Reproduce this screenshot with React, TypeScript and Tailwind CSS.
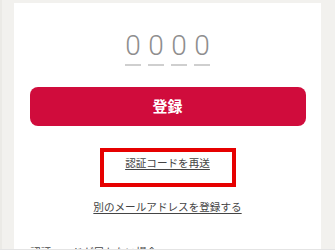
import React from "react";

const jp = { fontFamily: '"Noto Sans CJK JP", "Noto Sans", sans-serif' };

export default function App() {
  return (
    <div
      className="relative w-[335px] h-[250px] overflow-hidden bg-[#f2f1ee] pt-[3px] px-[14px]"
      style={jp}
    >
      <div className="absolute left-0 top-0 h-full w-[2px] bg-[#ebeae6]" />
      <div className="bg-white h-full flex flex-col items-center overflow-hidden">
        <div className="shrink-0 mt-[29px] flex gap-[7px]">
          {[0, 1, 2, 3].map((i) => (
            <div key={i} className="w-[16px] flex flex-col items-center">
              <span
                className="text-[28px] leading-[28px] font-light text-[#8e8e8e]"
                style={{ fontFamily: 'Roboto, "Noto Sans", sans-serif' }}
              >
                0
              </span>
              <div className="w-full h-[2px] bg-[#cfcfcf] mt-[4px]" />
            </div>
          ))}
        </div>
        <button className="shrink-0 mt-[21px] w-[276px] h-[39px] rounded-[8px] bg-[#d00c3c] text-white font-bold text-[15px] flex items-center justify-center">
          登録
        </button>
        <a className="shrink-0 mt-[29px] text-[10.6px] leading-[16px] text-[#444] underline underline-offset-[2px]">
          認証コードを再送
        </a>
        <a className="shrink-0 mt-[28px] text-[10.6px] leading-[16px] text-[#444] underline underline-offset-[2px]">
          別のメールアドレスを登録する
        </a>
        <div className="shrink-0 self-stretch pl-[16px] mt-[29px] text-[10.6px] leading-[16px] text-[#444]">
          認証コードが届かない場合
        </div>
      </div>
      <div className="absolute left-[100px] top-[148px] w-[136px] h-[39px] border-[4px] border-[#e60000]" />
      <div className="absolute left-0 bottom-0 w-full h-[1px] bg-[#e4e4e4]" />
    </div>
  );
}
